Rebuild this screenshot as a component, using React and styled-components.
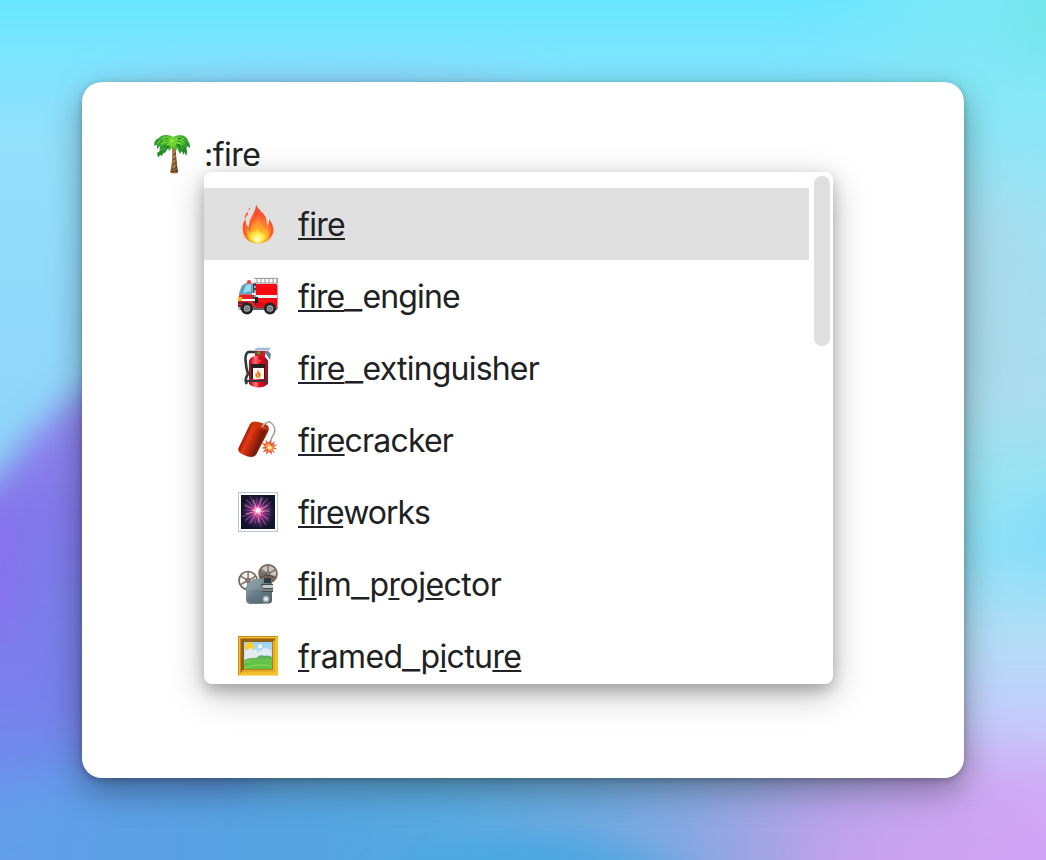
import React from "react";
import styled, { createGlobalStyle } from "styled-components";

const GlobalStyle = createGlobalStyle`
  *, *::before, *::after { box-sizing: border-box; }
  body { margin: 0; overflow: hidden; }
`;

const Stage = styled.main`
  position: relative;
  display: flex;
  width: 1046px;
  height: 860px;
  padding: 82px;
  overflow: hidden;
  font-family: Inter, "Liberation Sans", sans-serif;
  color: #202122;
`;

const WallpaperSvg = styled.svg`
  position: absolute;
  inset: 0;
  width: 100%;
  height: 100%;
`;

const Card = styled.section`
  position: relative;
  flex: 1;
  padding: 47px 71px;
  border-radius: 20px;
  background: #fff;
  box-shadow: 0 12px 34px rgba(0, 0, 0, 0.36), 0 2px 7px rgba(0, 0, 0, 0.22);
`;

const EditorLine = styled.div`
  display: flex;
  align-items: center;
  gap: 11px;
  height: 50px;
`;

const Label = styled.span`
  padding-top: 2px;
  font-size: 32px;
  line-height: 48px;
  letter-spacing: ${(p) => p.$spacing ?? -0.8}px;
  white-space: nowrap;
`;

const Match = styled.span`
  text-decoration: underline;
  text-decoration-thickness: 2px;
  text-underline-offset: 2px;
  text-decoration-skip-ink: none;
`;

const Underscore = styled.span`
  display: inline-block;
  width: 18px;
  text-align: center;
  letter-spacing: 0;
  transform: translateY(1px) scaleX(1.25);
`;

const Picture = styled.svg`
  flex: none;
  width: 40px;
  height: 40px;
  overflow: visible;
`;

const Popup = styled.div`
  position: absolute;
  top: 90px;
  left: 122px;
  display: flex;
  gap: 5px;
  width: 629px;
  height: 512px;
  overflow: hidden;
  border-radius: 8px;
  background: #fff;
  box-shadow: 0 10px 34px rgba(0, 0, 0, 0.28), 0 6px 14px rgba(0, 0, 0, 0.2);
`;

const List = styled.ul`
  width: 605px;
  margin: 0;
  padding: 16px 0 0;
  list-style: none;
`;

const Row = styled.li`
  display: flex;
  align-items: center;
  gap: 20px;
  height: 72px;
  padding: 0 34px;
  background: ${(p) => (p.$active ? "#e0e0e0" : "transparent")};
`;

const Thumb = styled.div`
  width: 16px;
  height: 170px;
  margin-top: 4px;
  border-radius: 8px;
  background: #dfdfdf;
`;

function Wallpaper() {
  return (
    <WallpaperSvg viewBox="0 0 1046 860" preserveAspectRatio="none" aria-hidden="true">
      <defs>
        <linearGradient id="sky" x1="0" y1="0" x2="0" y2="1">
          <stop offset="0" stopColor="#68e6ff" />
          <stop offset=".06" stopColor="#7be5ff" />
          <stop offset=".16" stopColor="#93e0fb" />
          <stop offset=".4" stopColor="#91d8fa" />
          <stop offset="1" stopColor="#80c8f0" />
        </linearGradient>
        <linearGradient id="east" x1="0" y1="-300" x2="0" y2="1160" gradientUnits="userSpaceOnUse">
          <stop offset=".205" stopColor="#7ae8f8" />
          <stop offset=".288" stopColor="#8ae6f6" />
          <stop offset=".365" stopColor="#a2e0f2" />
          <stop offset=".476" stopColor="#aadded" />
          <stop offset=".535" stopColor="#98e3f2" />
          <stop offset=".582" stopColor="#8ee1f7" />
          <stop offset=".641" stopColor="#b2ddf6" />
          <stop offset=".694" stopColor="#c2cdfa" />
          <stop offset=".741" stopColor="#ceb5f5" />
          <stop offset=".794" stopColor="#d1a1f5" />
        </linearGradient>
        <linearGradient id="west" x1="0" y1="380" x2="0" y2="860" gradientUnits="userSpaceOnUse">
          <stop offset="0" stopColor="#8f88ee" />
          <stop offset=".3" stopColor="#8278e9" />
          <stop offset=".65" stopColor="#7b80ec" />
          <stop offset=".84" stopColor="#6d8feb" />
          <stop offset="1" stopColor="#5ca2e8" />
        </linearGradient>
        <linearGradient id="south" x1="0" y1="0" x2="1046" y2="0" gradientUnits="userSpaceOnUse">
          <stop offset="0" stopColor="#639eea" />
          <stop offset=".15" stopColor="#5a9fe2" />
          <stop offset=".3" stopColor="#54a4e0" />
          <stop offset=".45" stopColor="#58aae0" />
          <stop offset=".6" stopColor="#74a9e0" />
          <stop offset=".7" stopColor="#96a6e2" />
          <stop offset=".78" stopColor="#b8a2e8" />
          <stop offset=".9" stopColor="#c8a6ef" />
          <stop offset="1" stopColor="#d2a7f7" />
        </linearGradient>
        <filter id="soft" x="-60%" y="-60%" width="220%" height="220%"><feGaussianBlur stdDeviation="16" /></filter>
        <filter id="softer" x="-100%" y="-100%" width="300%" height="300%"><feGaussianBlur stdDeviation="28" /></filter>
        <filter id="haze" x="-50%" y="-50%" width="200%" height="200%"><feGaussianBlur stdDeviation="45 10" /></filter>
      </defs>
      <rect width="1046" height="860" fill="url(#sky)" />
      <ellipse cx="320" cy="115" rx="210" ry="26" fill="#9dc4f8" filter="url(#softer)" />
      <rect x="870" y="-300" width="500" height="1460" fill="url(#east)" filter="url(#haze)" />
      <ellipse cx="985" cy="290" rx="22" ry="110" fill="#abd5e4" filter="url(#softer)" />
      <ellipse cx="1055" cy="530" rx="30" ry="35" fill="#7ed8fb" opacity=".8" filter="url(#softer)" />
      <ellipse cx="1050" cy="15" rx="32" ry="40" fill="#6fe5e2" filter="url(#softer)" />
      <path d="M-120 620 L0 475 Q45 410 100 384 L260 330 V1000 H-120Z" fill="url(#west)" filter="url(#soft)" />
      <ellipse cx="-4" cy="565" rx="22" ry="75" fill="#8c6ef0" opacity=".8" filter="url(#soft)" />
      <ellipse cx="88" cy="640" rx="24" ry="110" fill="#6d82e0" opacity=".6" filter="url(#softer)" />
      <path d="M100 765 H940 Q1000 780 1200 800 V1000 H-150 V850Z" fill="url(#south)" filter="url(#softer)" />
      <ellipse cx="970" cy="870" rx="150" ry="26" fill="#d2a1f4" opacity=".8" filter="url(#softer)" />
      <path d="M360 870 Q500 835 590 848 L720 875Z" fill="#40a5e0" filter="url(#soft)" />
    </WallpaperSvg>
  );
}

function Palm() {
  return (
    <Picture viewBox="0 0 40 40" aria-label="palm tree">
      <defs>
        <linearGradient id="trunk"><stop stopColor="#67401f" /><stop offset=".5" stopColor="#b9854b" /><stop offset="1" stopColor="#50331b" /></linearGradient>
        <radialGradient id="leaf" cx=".5" cy=".3"><stop stopColor="#8be73a" /><stop offset=".55" stopColor="#4cbe30" /><stop offset="1" stopColor="#238f2b" /></radialGradient>
      </defs>
      <path d="M19 13 L22.5 13 C23.2 21 23.8 30 25 38.5 Q21 40.5 17.2 38.5 C19 30 19.8 22 19 13Z" fill="url(#trunk)" />
      <path d="M19 36l5-3M19.5 31l4-3M20 26l3-2M20 21l3-2M19 38l6-2" stroke="#49301c" strokeWidth="1" />
      <path d="M20 3 C15 0 8 .5 6 4 C3 5 .5 8 1.5 12 L4 10.5 4 15 7 12 6.5 16 9 15 Q7 17 4 19 L5 23.5 Q8 19 9 22.5 Q10 18 12 19 L15 14 16 17 19.5 13 23 17 24 14 27 20 28.5 17 31 21 31 18 33.5 22 34 18 Q33 15 34 12 L37 14 Q37 9 35 7 C34 1 26 0 20 3Z" fill="url(#leaf)" />
      <path d="M19 9Q12 4 4 10M18 10Q10 8 7 17M20 10Q14 12 11 18M22 9Q29 4 35 11M22 10Q32 10 33 18M22 11Q28 13 30 18" fill="none" stroke="#127027" strokeWidth=".75" opacity=".8" />
      <path d="M15 11 Q11 10 10 14 L13 13 13 16 17 13Z M23 11 L28 15 27 10Z" fill="#126b22" opacity=".65" />
      <path d="M19 5Q13 2 9 4M22 5Q26 2 31 5M18 8L13 12M24 8L29 11M7 7L4 10M12 6L9 10M27 6L32 9" stroke="#a4ef55" strokeWidth="1" opacity=".7" />
      <circle cx="19.5" cy="8.5" r="4.2" fill="#70d72f" />
      <circle cx="19" cy="7" r="1.3" fill="#a6ee5c" />
    </Picture>
  );
}

function Fire() {
  return (
    <Picture viewBox="0 0 40 40" aria-label="fire">
      <defs>
        <radialGradient id="flame" cx=".5" cy=".85" r=".85"><stop stopColor="#ffe24b" /><stop offset=".25" stopColor="#ffb52d" /><stop offset=".45" stopColor="#ff7e2e" /><stop offset=".68" stopColor="#fc5630" /><stop offset="1" stopColor="#ec4828" /></radialGradient>
        <radialGradient id="core" cx=".5" cy=".75" r=".7"><stop stopColor="#fffdd9" /><stop offset=".45" stopColor="#fff052" /><stop offset="1" stopColor="#ffc42d" /></radialGradient>
        <linearGradient id="heart" x2="0" y2="1"><stop stopColor="#ff8a36" /><stop offset=".5" stopColor="#ffaa24" /><stop offset="1" stopColor="#ffd931" /></linearGradient>
      </defs>
      <path d="M18 0 C19 6 28 9 28.5 16 C29 19 29 20 29 21.5 C31 20 31 17 31 15 C35 20 37 26 34.5 31 C32 36 27 39.5 20 39.5 C12 39.5 6 35 5 28 C4 22 5 18 7.5 15 C7.5 20 9 22 11 23 C10 14 18 10 18 0Z" fill="url(#flame)" />
      <path d="M7 18Q5 23 7 28Q9 34 16 37M18 6Q19 12 13 19Q10 25 13 31M32 19Q36 26 32 32" fill="none" stroke="#f03d24" strokeWidth="1.2" opacity=".55" />
      <path d="M20 13 C20 20 26 21 27 28 Q29 24 29 23 C33 33 28 38 20 38 C11 38 7 32 10 26 L13 29 C14 22 20 20 20 13Z" fill="url(#heart)" opacity=".9" />
      <path d="M20 24 Q21 29 26 29 Q30 36 20 39 Q9 37 13 28 Q16 30 20 24Z" fill="url(#core)" />
      <path d="M9.5 8 Q6 11 7 15 Q8 12 10.5 10ZM10.8 4.5l1.5-.7-.4 1.8-1.5 1Z" fill="#fb6335" />
    </Picture>
  );
}

function Engine() {
  return (
    <Picture viewBox="0 -3 40 40" aria-label="fire engine">
      <path d="M4 7 L8 4 H18 V28 H0 V20Z" fill="#e82023" />
      <path d="M4 7 L8 4.5 H15 V15 H1Z" fill="#4ba4c8" stroke="#9faaaf" />
      <path d="M8 6 L13 5 V12 L5 14Z" fill="#a1d9e9" />
      <path d="M15 5H19V24H15Z" fill="#384951" />
      <path d="M16 7h2v2h-2zM16 11h2v3h-2zM16 16h2v2h-2z" fill="#9caab0" />
      <path d="M20 5H38Q39.5 5 39.5 7V30H18V6Z" fill="#f50610" />
      <path d="M16 -.6H39.5V4H16M19 -.6v5M23 -.6v5M27 -.6v5M31 -.6v5M35 -.6v5M39 -.6v5" fill="none" stroke="#949698" strokeWidth="1" />
      <path d="M9 3Q9 1 11 1T13 3V4.5H9Z" fill="#ff3331" />
      <path d="M1 16H18V19H39V16H18V14H14V16Z" fill="#e9f0f2" />
      <path d="M0 20H17V22H0Z" fill="#fff" />
      <path d="M17 18h3v8h-3z" fill="#1b1f24" />
      <path d="M0 18h4v4H0Z" fill="#f3b523" />
      <path d="M0 23h10v2H0zM0 26h7v2H0z" fill="#752029" />
      <path d="M0 28H39V31H0Z" fill="#626468" />
      <path d="M18 24H26V29H18Z" fill="#d61118" />
      {[9, 32].map((x) => (
        <g key={x}>
          <circle cx={x} cy="29.5" r="6" fill="#242629" />
          <circle cx={x} cy="29.5" r="3.2" fill="#9fa5a8" />
          <circle cx={x} cy="29.5" r="1.8" fill="#54585b" />
          <circle cx={x} cy="29.5" r=".7" fill="#e2e3e4" />
        </g>
      ))}
      <path d="M22 7h15M22 22h15" stroke="#ff352f" strokeWidth=".7" />
      <path d="M0 28h2v3H0z" fill="#bbc2c5" />
    </Picture>
  );
}

function Extinguisher() {
  return (
    <Picture viewBox="0 0 40 40" aria-label="fire extinguisher">
      <defs>
        <linearGradient id="tank"><stop stopColor="#861315" /><stop offset=".15" stopColor="#e01e28" /><stop offset=".35" stopColor="#ff7b80" /><stop offset=".55" stopColor="#e40b20" /><stop offset="1" stopColor="#8f171b" /></linearGradient>
      </defs>
      <path d="M20 4 H13 Q7 3 7.5 12 Q8 20 10 26 Q6 32 9 36" fill="none" stroke="#31393b" strokeWidth="2.6" />
      <path d="M16 1 L20 -.2 H33 L31 2.5 H18Z" fill="#a4bad7" />
      <path d="M17 3H30L33 6 32 12 28 6H18Z" fill="#66809b" />
      <path d="M17 3h10v7h-10z" fill="#c91d25" />
      <circle cx="20.5" cy="5" r="1.8" fill="#33a52f" />
      <path d="M11 13 Q12 9 17 8H23Q29 9 30 13V36Q26 39.5 20 39.5Q14 39.5 11 36Z" fill="url(#tank)" />
      <path d="M13 16H27V31H13Z" fill="#242222" />
      <path d="M15 20H26V31H15Z" fill="#fff6f0" />
      <path d="M20 21 Q20 24 22 25Q24 29 20 30Q16 29 18 25L19 26Z" fill="#ef621b" />
      <path d="M20 25Q22 29 20 29.5Q18 28 20 25Z" fill="#ffc444" />
      <path d="M9 32H30V34H9Z" fill="#33383a" />
      <path d="M14 12h9v2h-9z" fill="#ff4c51" opacity=".7" />
    </Picture>
  );
}

function Firecracker() {
  return (
    <Picture viewBox="0 0 40 40" aria-label="firecracker">
      <defs>
        <linearGradient id="stick" x1="6" y1="15" x2="24" y2="23" gradientUnits="userSpaceOnUse"><stop stopColor="#a81907" /><stop offset=".25" stopColor="#e03b14" /><stop offset=".5" stopColor="#be280b" /><stop offset=".85" stopColor="#741a0b" /><stop offset="1" stopColor="#9a270d" /></linearGradient>
      </defs>
      <g transform="translate(0 1)">
        <path d="M26 5 Q28 1 32 1 Q39 6 36 13 Q32 18 33 23" fill="none" stroke="#a79c8c" strokeWidth="1.5" />
        <path d="M12 3 Q14 -.8 20 1 L29 4 Q32 6 30 11 L18 34 Q14 38 6 34 Q-1 31 .5 27Z" fill="url(#stick)" />
        <path d="M14 2 Q17 0 23 2 Q31 4 30 8 Q28 10 21 7 Q14 5 14 2Z" fill="#c93510" />
        <path d="M24 6 Q27 1 31 1" fill="none" stroke="#c3b9a4" strokeWidth="1.5" />
        <path d="M32.5 19l1 4 3.5-3-1.5 4 4-.5-4 2.5 3.5 2-4.5.2 2.5 4-3.5-2 .5 3.5-3-3-3 3 .5-4-4 2 3-4-4-.5 3.5-2-3.5-3 4.5.5-.5-4 3 3Z" fill="#e84f34" />
        <path d="M32 22.5l1 2.5 3-1-2 2 3 1-3 1 1 3-3-2-2 2v-3l-3 1 2-3-3-1 3-1-1-2 3 1Z" fill="#ffac4c" />
        <circle cx="31.5" cy="26.5" r="1.8" fill="#fff3bd" />
      </g>
    </Picture>
  );
}

function Fireworks() {
  const rays = Array.from({ length: 26 }, (_, i) => {
    const angle = (i * Math.PI) / 13 + (i % 3) * 0.07;
    const radius = 12 + ((i * 7) % 6);
    return [19.5 + Math.cos(angle) * radius, 19 + Math.sin(angle) * radius];
  });
  return (
    <Picture viewBox="0 0 40 40" aria-label="fireworks">
      <defs><radialGradient id="burst"><stop stopColor="#f05dab" /><stop offset=".28" stopColor="#a22b82" /><stop offset=".6" stopColor="#40245b" /><stop offset="1" stopColor="#10152c" /></radialGradient></defs>
      <rect x=".5" y=".5" width="39" height="39" fill="#fff" stroke="#bac8ce" />
      <rect x="3" y="3" width="34" height="34" fill="url(#burst)" />
      {rays.map(([x, y], i) => <path key={i} d={`M19.5 19L${x} ${y}`} stroke={i % 3 ? "#d967b5" : "#f5b3c3"} strokeWidth={i % 2 ? 0.5 : 0.9} opacity=".8" />)}
      <path d="M20 13l1.5 3.5 4-1.5-2.5 3 3.5 2-4 .5.5 4-3.5-3-3.5 2 1-4-4-1 4-2-1.5-2.5 3.5 1.5Z" fill="#ff8fbe" />
      <circle cx="20" cy="18.5" r="2.5" fill="#fff0fb" />
    </Picture>
  );
}

function Reel({ cx, cy, r, fill }) {
  return (
    <g>
      <circle cx={cx} cy={cy} r={r - 1} fill={fill} stroke="#75675f" strokeWidth="1.7" />
      {[0, 1, 2, 3, 4, 5].map((i) => {
        const a = (i * Math.PI) / 3 - 0.5;
        return <path key={i} d={`M${cx} ${cy}L${cx + Math.cos(a) * (r - 1)} ${cy + Math.sin(a) * (r - 1)}`} stroke="#807269" strokeWidth="1.5" />;
      })}
      <circle cx={cx} cy={cy} r="2.4" fill="#6d625b" />
      <circle cx={cx} cy={cy} r="1" fill="#b4aaa1" />
    </g>
  );
}

function Projector() {
  return (
    <Picture viewBox="0 0 40 40" aria-label="film projector">
      <defs><linearGradient id="body" x2="1" y2="1"><stop stopColor="#8b9fa7" /><stop offset=".45" stopColor="#6c818a" /><stop offset="1" stopColor="#475d67" /></linearGradient></defs>
      <Reel cx={10} cy={16.5} r={10} fill="#f4f4f2" />
      <Reel cx={30} cy={9.8} r={10} fill="#cac5c0" />
      <path d="M22 6Q28 11 38 12L34 18H22Z" fill="#493e38" opacity=".65" />
      <path d="M15 15L29 14 34 17V36Q34 39 31 39.5L12 40Q8 39 8 36V23Z" fill="url(#body)" />
      <path d="M15 16L24 15V25L9 26V23Z" fill="#9aacb3" opacity=".4" />
      <path d="M23 20H35V28H24Z" fill="#46494b" />
      <path d="M25 21H35V24H25Z" fill="#c6cacc" />
      <path d="M25 25H35V27H25ZM22 21h3v6h-3Z" fill="#7b8284" />
      <path d="M26 14H33V19H26Z" fill="#303b40" />
      <circle cx="28" cy="35" r="3.5" fill="#9da6a9" /><circle cx="28" cy="35" r="2" fill="#e9eaea" />
      <path d="M10 34h10M10 36h10M11 38h9" stroke="#5b727d" strokeWidth=".7" />
    </Picture>
  );
}

function FramedPicture() {
  return (
    <Picture viewBox="0 0 40 40" aria-label="framed picture">
      <defs>
        <linearGradient id="land" x2="0" y2="1"><stop stopColor="#54a855" /><stop offset=".5" stopColor="#78cb50" /><stop offset="1" stopColor="#43ad31" /></linearGradient>
        <linearGradient id="air" x2="0" y2="1"><stop stopColor="#98d2f0" /><stop offset="1" stopColor="#edf8f7" /></linearGradient>
      </defs>
      <path d="M0 0H40V39.5H0Z" fill="#f0bd26" />
      <path d="M0 0H40L37 3H3V37L0 39.5Z" fill="#c38619" />
      <path d="M1.5 1.5H38.5V38H1.5Z" fill="none" stroke="#f6c52e" strokeWidth="1.2" />
      <path d="M3 3H37V36H3Z" fill="#b67a16" />
      <path d="M3 3H37L34 6H6V34L3 36Z" fill="#93601a" />
      <path d="M4 35H36V5" fill="none" stroke="#efbd31" strokeWidth="1.6" />
      <path d="M6 6H34V33H6Z" fill="url(#air)" />
      <circle cx="11.5" cy="10.5" r="4.4" fill="#ffcf28" />
      <path d="M7 18Q6 14 10 14Q12 10 15 14Q19 13 20 18V22H7ZM20 18Q21 14 24 15Q26 10 30 13L33 15V19H20Z" fill="#e6eaf1" />
      <path d="M20 10l2-2 2 1v3h-4Z" fill="#eef3fa" />
      <path d="M6 24Q12 21 18 22Q22 18 26 20Q31 19 34 21V33H6Z" fill="url(#land)" />
      <path d="M6 28Q15 24 23 25T34 24V33H6Z" fill="#62c446" />
      <path d="M6 32Q18 27 34 30" fill="none" stroke="#83d658" strokeWidth="1.2" />
    </Picture>
  );
}

const suggestions = [
  { icon: Fire, parts: [["fire", true]], spacing: -0.7 },
  { icon: Engine, parts: [["fire", true], ["_"], ["engine"]], spacing: -0.85 },
  { icon: Extinguisher, parts: [["fire", true], ["_"], ["extinguisher"]] },
  { icon: Firecracker, parts: [["fire", true], ["cracker"]] },
  { icon: Fireworks, parts: [["fire", true], ["works"]], spacing: -1 },
  { icon: Projector, parts: [["fi", true], ["lm"], ["_"], ["p"], ["r", true], ["oj"], ["e", true], ["ctor"]], spacing: -0.5 },
  { icon: FramedPicture, parts: [["f", true], ["ramed"], ["_"], ["p"], ["i", true], ["ctu"], ["re", true]], spacing: -0.62 },
];

function LabelPart({ text, matched }) {
  if (text === "_") return <Underscore>_</Underscore>;
  return matched ? <Match>{text}</Match> : text;
}

export default function App() {
  return (
    <>
      <GlobalStyle />
      <Stage>
        <Wallpaper />
        <Card>
          <EditorLine>
            <Palm />
            <Label $spacing={-0.5}>:fire</Label>
          </EditorLine>
          <Popup>
            <List>
              {suggestions.map(({ icon: Icon, parts, spacing }, index) => (
                <Row key={index} $active={index === 0}>
                  <Icon />
                  <Label $spacing={spacing}>
                    {parts.map(([text, matched], i) => <LabelPart key={i} text={text} matched={matched} />)}
                  </Label>
                </Row>
              ))}
            </List>
            <Thumb />
          </Popup>
        </Card>
      </Stage>
    </>
  );
}
